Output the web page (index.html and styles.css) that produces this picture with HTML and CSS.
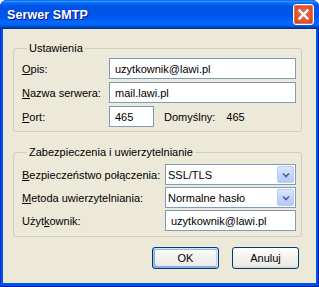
FILE: index.html
```html
<!DOCTYPE html>
<html lang="pl">
<head>
  <meta charset="UTF-8" />
  <title>Serwer SMTP</title>
  <link rel="stylesheet" href="styles.css">
</head>
<body>
  <div class="window">
    <div class="titlebar">
      <span class="title">Serwer SMTP</span>
      <button class="close" aria-label="Zamknij">
        <svg width="19" height="19" viewBox="0 0 19 19">
          <path d="M5.5 5.5 L13.5 13.5 M13.5 5.5 L5.5 13.5" stroke="#fff" stroke-width="2.4" stroke-linecap="square" />
        </svg>
      </button>
    </div>

    <div class="client">
      <fieldset class="group group-main">
        <legend>Ustawienia</legend>
        <label class="lbl"><u>O</u>pis:</label>
        <input class="field" type="text" value="uzytkownik@lawi.pl" />
        <label class="lbl"><u>N</u>azwa serwera:</label>
        <input class="field" type="text" value="mail.lawi.pl" />
        <label class="lbl"><u>P</u>ort:</label>
        <div class="port-row">
          <input class="field port" type="text" value="465" />
          <span class="default-lbl">Domyślny:</span>
          <span class="default-val">465</span>
        </div>
      </fieldset>

      <fieldset class="group group-security">
        <legend>Zabezpieczenia i uwierzytelnianie</legend>
        <label class="lbl"><u>B</u>ezpieczeństwo połączenia:</label>
        <div class="combo">
          <span class="combo-text">SSL/TLS</span>
          <span class="combo-btn">
            <svg width="8" height="6" viewBox="0 0 8 6"><path d="M1 1.5 L4 4.5 L7 1.5" fill="none" stroke="#4d6185" stroke-width="1.6" /></svg>
          </span>
        </div>
        <label class="lbl"><u>M</u>etoda uwierzytelniania:</label>
        <div class="combo">
          <span class="combo-text">Normalne hasło</span>
          <span class="combo-btn">
            <svg width="8" height="6" viewBox="0 0 8 6"><path d="M1 1.5 L4 4.5 L7 1.5" fill="none" stroke="#4d6185" stroke-width="1.6" /></svg>
          </span>
        </div>
        <label class="lbl">Użyt<u>k</u>ownik:</label>
        <input class="field" type="text" value="uzytkownik@lawi.pl" />
      </fieldset>

      <div class="buttons">
        <button class="btn btn-default">OK</button>
        <button class="btn">Anuluj</button>
      </div>
    </div>
  </div>
</body>
</html>
```

FILE: styles.css
```css
body {
  margin: 0;
  font-family: 'Liberation Sans', Arial, sans-serif;
  font-size: 11px;
  color: #000;
  background: #fff;
}

.window {
  width: 319px;
  height: 287px;
  box-sizing: border-box;
  padding: 0 3px 4px 3px;
  background: #0054e3;
  border-radius: 7px 7px 0 0;
  box-shadow: inset 1px 0 #0831d9, inset -1px 0 #001ea0, inset 0 -1px #001ea0;
  display: flex;
  flex-direction: column;
}

/* title bar */
.titlebar {
  height: 29px;
  margin: 0 -3px;
  padding: 0 5px 0 7px;
  display: flex;
  align-items: center;
  justify-content: space-between;
  border-radius: 7px 7px 0 0;
  background: linear-gradient(180deg, #0058ee 0%, #3593ff 4%, #288eff 6%, #127dff 8%, #036ffc 10%, #0262ee 14%, #0057e5 20%, #0054e3 24%, #0055eb 56%, #005bf5 66%, #026afe 76%, #0062ef 86%, #0052d6 92%, #0040ab 94%, #003092 100%);
}

.title {
  color: #fff;
  font-weight: bold;
  font-size: 12.5px;
  letter-spacing: 0.1px;
  text-shadow: 1px 1px #0f1089;
  margin-top: 1px;
}

.close {
  width: 21px;
  height: 21px;
  padding: 0;
  border: 1px solid #fff;
  border-radius: 3px;
  background: radial-gradient(circle at 50% 45%, #ea6e4d 0%, #e35a36 45%, #d24623 80%, #b83a1c 100%);
  box-shadow: inset 0 0 0 1px rgba(255, 200, 180, 0.35);
  display: flex;
  align-items: center;
  justify-content: center;
}

/* client area */
.client {
  flex: 1;
  background: #ece9d8;
  padding: 13px 14px 0 10px;
  display: flex;
  flex-direction: column;
}

.group {
  margin: 0;
  border: 1px solid #d0d0bf;
  border-radius: 3px;
  display: grid;
  align-items: center;
}

.group legend {
  padding: 0 2px;
  margin-left: 5px;
  line-height: 13px;
}

.group-main {
  padding: 3px 5px 4px 8px;
  grid-template-columns: 87px 1fr;
  row-gap: 3px;
}

.group-security {
  margin-top: 14px;
  padding: 5px 5px 5px 8px;
  grid-template-columns: 143px 1fr;
  row-gap: 2px;
}

.lbl {
  white-space: nowrap;
}

.field {
  height: 21px;
  box-sizing: border-box;
  margin: 0;
  border: 1px solid #7f9db9;
  padding: 0 5px;
  font: inherit;
  color: #000;
  background: #fff;
  outline: none;
  width: 100%;
}

.port-row {
  display: flex;
  align-items: center;
}

.field.port {
  width: 45px;
}

.default-lbl {
  margin-left: 10px;
}

.default-val {
  margin-left: 11px;
}

.combo {
  height: 21px;
  box-sizing: border-box;
  border: 1px solid #7f9db9;
  background: #fff;
  display: flex;
  align-items: center;
  padding: 0 1px 0 2px;
}

.combo-text {
  flex: 1;
}

.combo-btn {
  width: 15px;
  height: 15px;
  border: 1px solid #bbcbf3;
  border-radius: 2px;
  background: linear-gradient(180deg, #dbe6fd 0%, #c5d6fb 50%, #b4c8f6 100%);
  display: flex;
  align-items: center;
  justify-content: center;
}

/* buttons */
.buttons {
  margin-top: 10px;
  margin-right: 3px;
  display: flex;
  justify-content: flex-end;
  gap: 13px;
}

.btn {
  width: 67px;
  height: 22px;
  padding: 0;
  border: 1px solid #003c74;
  border-radius: 3px;
  font: inherit;
  color: #000;
  background: linear-gradient(180deg, #fff 0%, #f4f3ee 40%, #ecebe6 86%, #d6d0c5 100%);
}

.btn-default {
  box-shadow: inset -1px 1px #cee7ff, inset 1px 2px #98b8ea, inset -2px 2px #bcd4f6, inset 1px -1px #89ade4, inset 2px -2px #89ade4;
}
```
